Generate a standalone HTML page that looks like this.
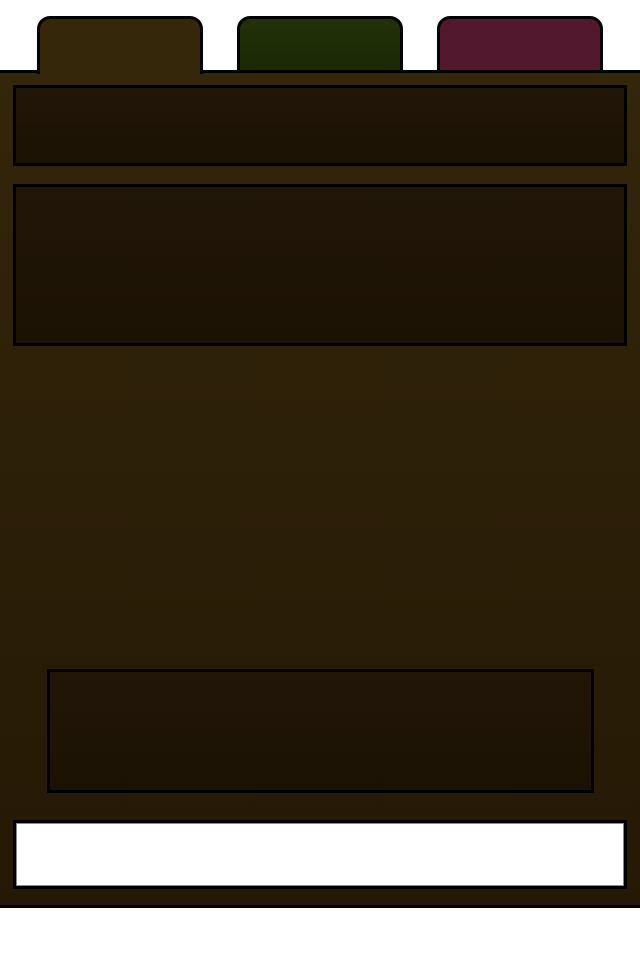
<!DOCTYPE html>
<html><head><style>
body{margin:0;width:640px;height:960px;background:#fff;position:relative;overflow:hidden}
div{position:absolute;box-sizing:border-box}
.tab{top:16px;width:166px;height:60px;border:3px solid #000;border-radius:13px 13px 0 0}
.box{border:3px solid #000;background:linear-gradient(#211608,#1c1204)}
</style></head><body>
<div style="left:0;top:70px;width:640px;height:838px;border-top:3px solid #000;border-bottom:3px solid #000;background:linear-gradient(#33260a,#2c1f08 50%,#251905)"></div>
<div class="tab" style="left:37px;background:#34270a;border-bottom:none;height:58px"></div>
<div class="tab" style="left:237px;background:linear-gradient(#233109,#1b2806);height:57px"></div>
<div class="tab" style="left:437px;background:#51182e;height:57px"></div>
<div class="box" style="left:13px;top:85px;width:614px;height:81px"></div>
<div class="box" style="left:13px;top:184px;width:614px;height:162px"></div>
<div class="box" style="left:47px;top:669px;width:547px;height:124px"></div>
<div style="left:13px;top:820px;width:614px;height:69px;border:3px solid #000;background:#fff;box-shadow:inset 0 0 0 1px #888"></div>
</body></html>
